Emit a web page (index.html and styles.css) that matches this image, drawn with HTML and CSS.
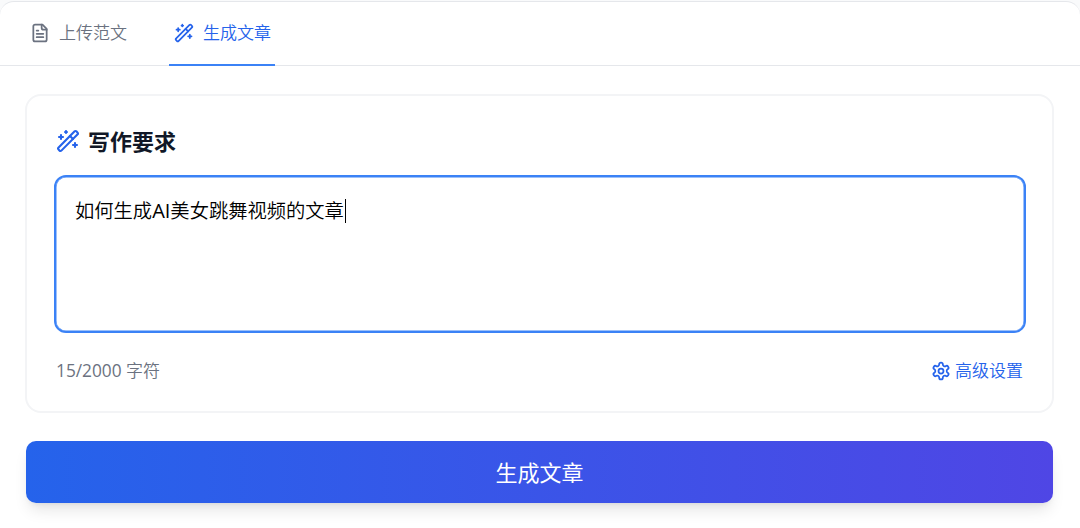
FILE: index.html
```
<!DOCTYPE html>
<html lang="zh-CN">
<head>
	<meta charset="UTF-8">
	<title>生成文章</title>
	<link rel="stylesheet" href="styles.css">
</head>
<body>
<svg class="symbols">
	<symbol id="wand" viewBox="0 0 24 24">
		<path d="m21.64 3.64-1.28-1.28a1.21 1.21 0 0 0-1.72 0L2.36 18.64a1.21 1.21 0 0 0 0 1.72l1.28 1.28a1.2 1.2 0 0 0 1.72 0L21.64 5.36a1.2 1.2 0 0 0 0-1.72Z"/>
		<path d="m14 7 3 3M5 6v4M19 14v4M10 2v2M7 8H3M21 16h-4M11 3H9"/>
	</symbol>
</svg>
<div class="panel">
	<div class="tabs">
		<a class="tab">
			<svg class="icon" viewBox="0 0 24 24"><path d="M15 2H6a2 2 0 0 0-2 2v16a2 2 0 0 0 2 2h12a2 2 0 0 0 2-2V7Z"/><path d="M14 2v4a2 2 0 0 0 2 2h4M10 9H8M16 13H8M16 17H8"/></svg>
			<span>上传范文</span>
		</a>
		<a class="tab cur">
			<svg class="icon"><use href="#wand"/></svg>
			<span>生成文章</span>
		</a>
	</div>
	<div class="content">
		<div class="card">
			<h2 class="title">
				<svg class="icon"><use href="#wand"/></svg>
				<span>写作要求</span>
			</h2>
			<div class="input"><span>如何生成<b>AI</b>美女跳舞视频的文章</span><i class="caret"></i></div>
			<div class="foot">
				<span class="count"><b>15/2000</b> 字符</span>
				<a class="setting">
					<svg class="icon" viewBox="0 0 24 24"><path d="M12.22 2h-.44a2 2 0 0 0-2 2v.18a2 2 0 0 1-1 1.73l-.43.25a2 2 0 0 1-2 0l-.15-.08a2 2 0 0 0-2.73.73l-.22.38a2 2 0 0 0 .73 2.73l.15.1a2 2 0 0 1 1 1.72v.51a2 2 0 0 1-1 1.74l-.15.09a2 2 0 0 0-.73 2.73l.22.38a2 2 0 0 0 2.73.73l.15-.08a2 2 0 0 1 2 0l.43.25a2 2 0 0 1 1 1.73V20a2 2 0 0 0 2 2h.44a2 2 0 0 0 2-2v-.18a2 2 0 0 1 1-1.73l.43-.25a2 2 0 0 1 2 0l.15.08a2 2 0 0 0 2.73-.73l.22-.39a2 2 0 0 0-.73-2.73l-.15-.08a2 2 0 0 1-1-1.74v-.5a2 2 0 0 1 1-1.74l.15-.09a2 2 0 0 0 .73-2.73l-.22-.38a2 2 0 0 0-2.73-.73l-.15.08a2 2 0 0 1-2 0l-.43-.25a2 2 0 0 1-1-1.73V4a2 2 0 0 0-2-2z"/><circle cx="12" cy="12" r="3"/></svg>
					<span>高级设置</span>
				</a>
			</div>
		</div>
		<button class="submit">生成文章</button>
	</div>
</div>
</body>
</html>
```
FILE: styles.css
```
*{margin:0;padding:0;box-sizing:border-box;}
body{height:528px;padding-top:1px;overflow:hidden;background:#f9fafb;font:350 17px/24px "Open Sans","Noto Sans CJK SC",sans-serif;color:#111827;}
b{font-weight:400;}
.symbols{display:none;}
.icon{display:block;flex:none;width:20px;height:20px;fill:none;stroke:currentColor;stroke-width:2.1;stroke-linecap:round;stroke-linejoin:round;}

.panel{height:540px;background:#fff;border-top:1px solid #e5e7eb;border-radius:14px 14px 0 0;}
.tabs{display:flex;gap:38px;height:64px;padding-left:24px;border-bottom:1px solid #e5e7eb;}
.tab{display:flex;align-items:center;gap:9px;height:64px;padding:0 4px 0 6px;border-bottom:2px solid transparent;color:#6b7280;}
.tab.cur{padding-left:5px;border-color:#3b82f6;color:#2563eb;}

.content{padding:28px 26px 0 25px;}
.card{height:319px;padding:29px 26px 0 28px;border:2px solid #f3f4f6;border-radius:16px;}
.title{display:flex;align-items:center;gap:8px;height:32px;margin-left:1px;font-size:22px;font-weight:700;}
.title .icon{width:24px;height:24px;color:#2563eb;}
.input{display:flex;height:158px;margin:18px 0 0 -1px;padding:20px 19px;border:2px solid #3b82f6;border-radius:12px;box-shadow:inset 0 0 0 .5px #3b82f6;font-size:19.3px;line-height:28px;color:#000;}
.input b{font-size:20px;}
.caret{width:1px;height:24px;margin:2px 0 0 1px;background:#000;}
.foot{display:flex;justify-content:space-between;align-items:center;height:24px;margin-top:26px;padding:0 3px 0 1px;}
.count{color:#6b7280;}
.count b{font-size:17.3px;}
.setting{display:flex;align-items:center;gap:4px;color:#2563eb;}

.submit{display:block;width:1027px;height:62px;margin:28px 0 0 1px;border:0;border-radius:10px;background:linear-gradient(90deg,#2563eb,#4f46e5);box-shadow:0 10px 15px -3px rgba(0,0,0,.1),0 4px 6px -4px rgba(0,0,0,.1);font:400 22px/62px "Open Sans","Noto Sans CJK SC",sans-serif;color:#fff;}
```
